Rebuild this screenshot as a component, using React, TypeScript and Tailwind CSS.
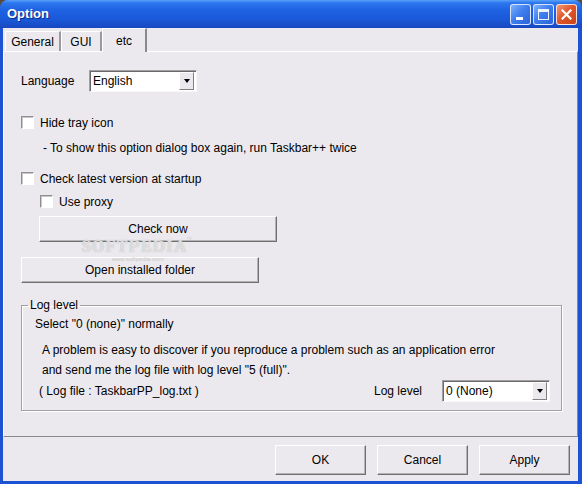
import { FC, ReactNode } from 'react'

const font = { fontFamily: '"Liberation Sans", Arial, sans-serif' }

// Raised classic button
const Button: FC<{ className?: string; children: ReactNode }> = ({ className = '', children }) => (
  <div
    className={`flex items-center justify-center border border-t-white border-l-white border-b-[#707070] border-r-[#707070] bg-[#ECE9EE] text-[12px] leading-[14px] text-black shadow-[inset_-1px_-1px_0_#b4b4b4] ${className}`}
  >
    <span>{children}</span>
  </div>
)

const Checkbox: FC<{ label: string; className?: string }> = ({ label, className = '' }) => (
  <div className={`flex h-[13px] items-center ${className}`}>
    <div className="h-[13px] w-[13px] border border-t-[#909090] border-l-[#909090] border-b-white border-r-white bg-white shadow-[inset_1px_1px_0_#c8c8c8]" />
    <span className="ml-[6px] text-[12px] leading-[14px]">{label}</span>
  </div>
)

const Combo: FC<{ value: string; className?: string }> = ({ value, className = '' }) => (
  <div
    className={`flex h-[22px] w-[108px] items-center border border-t-[#a0a0a0] border-l-[#a0a0a0] border-b-[#f8f8f8] border-r-[#f8f8f8] bg-white shadow-[inset_1px_1px_0_#6a6a6a] ${className}`}
  >
    <span className="flex-1 pl-[3px] text-[12px] leading-[14px]">{value}</span>
    <div className="mr-[2px] flex h-[18px] w-[15px] items-center justify-center border border-t-white border-l-white border-b-[#808080] border-r-[#808080] bg-[#ECE9EE]">
      <div className="h-0 w-0 border-l-[3.5px] border-r-[3.5px] border-t-[4px] border-l-transparent border-r-transparent border-t-black" />
    </div>
  </div>
)

const TitleButton: FC<{ kind: 'min' | 'max' | 'close' }> = ({ kind }) => {
  const base =
    kind === 'close'
      ? 'bg-[linear-gradient(135deg,#f09a7a_0%,#e2572b_45%,#c94218_100%)]'
      : 'bg-[linear-gradient(135deg,#7cb2fb_0%,#3f7fee_45%,#2a62d8_100%)]'
  return (
    <div className={`flex h-[21px] w-[21px] items-center justify-center rounded-[3px] border border-white/80 ${base}`}>
      {kind === 'min' && <div className="mt-[8px] -ml-[3px] h-[3px] w-[7px] bg-white" />}
      {kind === 'max' && <div className="h-[11px] w-[11px] border border-t-[3px] border-white/90" />}
      {kind === 'close' && (
        <svg width="11" height="11" viewBox="0 0 11 11">
          <path d="M1.5 1.5 L9.5 9.5 M9.5 1.5 L1.5 9.5" stroke="white" strokeWidth="2.2" strokeLinecap="square" />
        </svg>
      )}
    </div>
  )
}

const Tab: FC<{ label: string; selected?: boolean; className?: string }> = ({ label, selected, className = '' }) => (
  <div
    className={
      selected
        ? `relative z-10 -mb-px flex h-[24px] items-start justify-center border-t border-l border-t-white border-l-white border-r-2 border-r-[#8a8a8a] bg-[#ECE9EE] pt-[3px] text-[12px] ${className}`
        : `flex h-[20px] items-center justify-center border-t border-l border-t-white border-l-white border-r-2 border-r-[#9a9a9a] pt-[1px] text-[12px] ${className}`
    }
  >
    {label}
  </div>
)

export default function App() {
  return (
    <div className="h-[484px] w-[582px] overflow-hidden bg-[#5a4a3a] text-black" style={font}>
      <div className="flex h-full flex-col rounded-t-[8px] bg-[#1c52d4]">
        {/* Title bar */}
        <div className="flex h-[28px] items-center rounded-t-[8px] bg-[linear-gradient(180deg,#5aa2fb_0%,#2d78ee_10%,#1f62e2_35%,#1a58d8_70%,#1848c0_100%)] pl-[7px] pr-[5px]">
          <span className="flex-1 text-[13px] font-bold text-white [text-shadow:1px_1px_0_#0c2a8a]">Option</span>
          <div className="flex gap-[2px]">
            <TitleButton kind="min" />
            <TitleButton kind="max" />
            <TitleButton kind="close" />
          </div>
        </div>

        {/* Client area */}
        <div className="mb-[3px] ml-[3px] mr-[4px] flex flex-1 flex-col bg-[#ECE9EE]">
          {/* Tabs */}
          <div className="flex h-[23px] shrink-0 items-end pl-[2px]">
            <Tab label="General" className="w-[56px]" />
            <Tab label="GUI" className="w-[41px]" />
            <Tab label="etc" selected className="w-[45px]" />
          </div>

          {/* Tab panel */}
          <div className="relative flex flex-1 flex-col border border-t-white border-l-white border-b-[#8a8a8a] border-r-[#8a8a8a] pl-[17px] pr-[15px]">
            <div className="mt-[18px] flex h-[22px] items-center">
              <span className="w-[68px] text-[12px]">Language</span>
              <Combo value="English" />
            </div>

            <Checkbox label="Hide tray icon" className="mt-[24px]" />
            <div className="mt-[12px] pl-[22px] text-[12px] leading-[14px]">
              - To show this option dialog box again, run Taskbar++ twice
            </div>

            <Checkbox label="Check latest version at startup" className="mt-[17px]" />
            <Checkbox label="Use proxy" className="ml-[19px] mt-[10px]" />

            <Button className="ml-[18px] mt-[8px] h-[26px] w-[238px]">Check now</Button>
            <Button className="mt-[15px] h-[26px] w-[238px]">Open installed folder</Button>

            <fieldset className="mt-[15px] border border-[#a0a0a0] pb-[8px] pr-[11px] shadow-[inset_1px_1px_0_white,1px_1px_0_white]">
              <legend className="ml-[6px] px-[2px] text-[12px] leading-[14px]">Log level</legend>
              <div className="mt-[5px] pl-[13px] text-[12px] leading-[14px]">Select "0 (none)" normally</div>
              <div className="mt-[9px] pl-[20px] text-[12px] leading-[20px]">
                A problem is easy to discover if you reproduce a problem such as an application error
                <br />
                and send me the log file with log level "5 (full)".
              </div>
              <div className="flex h-[22px] items-center">
                <span className="flex-1 pl-[17px] text-[12px]">( Log file : TaskbarPP_log.txt )</span>
                <span className="w-[68px] text-[12px]">Log level</span>
                <Combo value="0 (None)" />
              </div>
            </fieldset>

            {/* watermark */}
            <div className="pointer-events-none absolute left-[78px] top-[185px] flex flex-col items-center">
              <span className="font-serif text-[19px] font-bold leading-[19px] tracking-[1px] text-white/60 [text-shadow:0_0_1px_#a8a8a8]">
                SOFTPEDIA<span className="align-top text-[7px] leading-[7px]">™</span>
              </span>
              <span className="text-[6px] leading-[6px] text-[#c8c8c8]">www.softpedia.com</span>
            </div>
          </div>

          {/* Footer */}
          <div className="flex h-[44px] shrink-0 justify-end gap-[11px] pr-[8px] pt-[8px]">
            <Button className="h-[30px] w-[91px]">OK</Button>
            <Button className="h-[30px] w-[91px]">Cancel</Button>
            <Button className="h-[30px] w-[91px]">Apply</Button>
          </div>
        </div>
      </div>
    </div>
  )
}
